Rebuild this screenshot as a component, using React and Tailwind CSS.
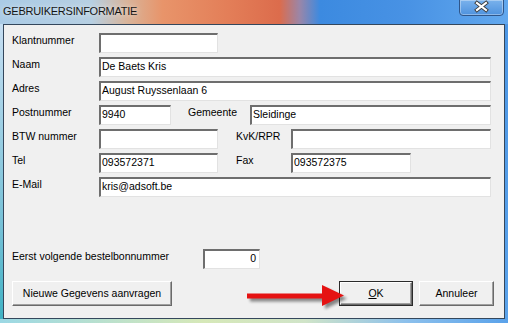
import React from "react";

const font = { fontFamily: '"Liberation Sans", Arial, sans-serif' };

// sunken classic edit box
function Field({ w, value, right }) {
  return (
    <div
      className={`${w} h-[20px] bg-white border-t-2 border-l-2 border-b border-r border-t-[#6e6e6e] border-l-[#6e6e6e] border-b-[#e2e2e2] border-r-[#e2e2e2] text-[10.5px] leading-[15px] text-black whitespace-nowrap overflow-hidden ${
        right ? "text-right pr-[3px]" : "pl-[1px]"
      }`}
    >
      {value}
    </div>
  );
}

function Label({ w, children }) {
  return (
    <div className={`${w} shrink-0 text-[10.5px] leading-[14px] text-black whitespace-nowrap`}>
      {children}
    </div>
  );
}

function Button({ w, children, isDefault }) {
  const inner = (
    <div className="w-full h-full flex items-center justify-center bg-[#f0f0f0] border border-t-white border-l-white border-b-[#6a6a6a] border-r-[#6a6a6a] shadow-[inset_-1px_-1px_0_#a0a0a0] text-[10.5px] text-black whitespace-nowrap">
      {children}
    </div>
  );
  return (
    <button
      type="button"
      className={`${w} h-[25px] p-0 ${isDefault ? "border border-[#2b2b2b]" : ""}`}
    >
      {inner}
    </button>
  );
}

export default function App() {
  return (
    <div className="relative w-[508px] h-[323px] overflow-hidden flex flex-col" style={font}>
      {/* ================= TITLE BAR ================= */}
      <div className="relative h-[24px] shrink-0 bg-[linear-gradient(90deg,#aacbe6_0%,#b6cfe2_18%,#d8b49a_25%,#e8946a_32%,#e37e58_45%,#dc6c4c_55%,#9a86a8_59%,#3c8ae0_63%,#4892e4_80%,#62a8ee_100%)]">
        <div className="pl-[3px] pt-[4px] text-[11px] leading-[14px] tracking-[-0.25px] text-[#151515] [text-shadow:0_0_6px_rgba(255,255,255,0.8)]">
          GEBRUIKERSINFORMATIE
        </div>
        <div className="absolute left-[459px] top-[-1px] w-[45px] h-[17px] rounded-b-[4px] border border-[#2f568a] bg-[linear-gradient(180deg,#7ab2ec,#4e92de)] shadow-[inset_0_0_0_1px_rgba(255,255,255,0.35)]">
          <svg width="45" height="17" className="absolute left-[-1px] top-[-1px]">
            <path d="M18 4 L27 11 M27 4 L18 11" stroke="#3a3a3a" strokeWidth="4" strokeLinecap="square" />
            <path d="M18 4 L27 11 M27 4 L18 11" stroke="#ffffff" strokeWidth="2.2" strokeLinecap="square" />
          </svg>
        </div>
      </div>

      {/* ================= FRAME + CLIENT ================= */}
      <div className="flex flex-1">
        <div className="w-[3px] bg-[linear-gradient(180deg,#c6def2,#74c0d6_70%,#3fb2c4)]" />
        <div className="flex-1 border border-[#34475c] bg-[#f0f0f0] flex flex-col pl-[8px] pr-[10px] pt-[8px]">
          <div className="flex flex-col gap-[4px]">
            <div className="flex h-[20px]">
              <Label w="w-[87px]">Klantnummer</Label>
              <Field w="w-[119px]" value="" />
            </div>
            <div className="flex h-[20px]">
              <Label w="w-[87px]">Naam</Label>
              <Field w="w-[392px]" value="De Baets Kris" />
            </div>
            <div className="flex h-[20px]">
              <Label w="w-[87px]">Adres</Label>
              <Field w="w-[392px]" value="August Ruyssenlaan 6" />
            </div>
            <div className="flex h-[20px]">
              <Label w="w-[87px]">Postnummer</Label>
              <Field w="w-[72px]" value="9940" />
              <div className="ml-[17px]">
                <Label w="w-[62px]">Gemeente</Label>
              </div>
              <Field w="w-[241px]" value="Sleidinge" />
            </div>
            <div className="flex h-[20px]">
              <Label w="w-[87px]">BTW nummer</Label>
              <Field w="w-[119px]" value="" />
              <div className="ml-[18px]">
                <Label w="w-[55px]">KvK/RPR</Label>
              </div>
              <Field w="w-[200px]" value="" />
            </div>
            <div className="flex h-[20px]">
              <Label w="w-[87px]">Tel</Label>
              <Field w="w-[119px]" value="093572371" />
              <div className="ml-[18px]">
                <Label w="w-[55px]">Fax</Label>
              </div>
              <Field w="w-[120px]" value="093572375" />
            </div>
            <div className="flex h-[20px]">
              <Label w="w-[87px]">E-Mail</Label>
              <Field w="w-[392px]" value="kris@adsoft.be" />
            </div>
          </div>

          <div className="flex h-[20px] mt-[52px]">
            <Label w="w-[191px]">Eerst volgende bestelbonnummer</Label>
            <Field w="w-[57px]" value="0" right />
          </div>

          <div className="flex mt-[12px]">
            <Button w="w-[160px]">Nieuwe Gegevens aanvragen</Button>
            <div className="ml-auto flex gap-[6px]">
              <Button w="w-[74px]" isDefault>
                <span className="underline underline-offset-[1px]">O</span>K
              </Button>
              <Button w="w-[75px]">Annuleer</Button>
            </div>
          </div>
        </div>
        <div className="w-[3px] bg-[linear-gradient(180deg,#4c96e4,#5aa2ea)]" />
      </div>
      <div className="h-[4px] shrink-0 bg-[linear-gradient(90deg,#9cd8e4_0%,#d6e8b8_40%,#d0e4c8_60%,#8cc0ec_80%,#5aa2ea_100%)]" />

      {/* ================= RED ARROW ================= */}
      <svg className="absolute left-0 top-0 pointer-events-none" width="508" height="323">
        <defs>
          <filter id="sh" x="-20%" y="-50%" width="140%" height="200%">
            <feGaussianBlur stdDeviation="1.6" />
          </filter>
        </defs>
        <g transform="translate(3 3)" fill="#000" opacity="0.45" filter="url(#sh)">
          <rect x="247" y="293.5" width="77" height="5" />
          <polygon points="322,285 344,295.5 322,306" />
        </g>
        <g fill="#e51212">
          <rect x="247" y="293.5" width="77" height="5" />
          <polygon points="322,285 344,295.5 322,306" />
        </g>
      </svg>
    </div>
  );
}
